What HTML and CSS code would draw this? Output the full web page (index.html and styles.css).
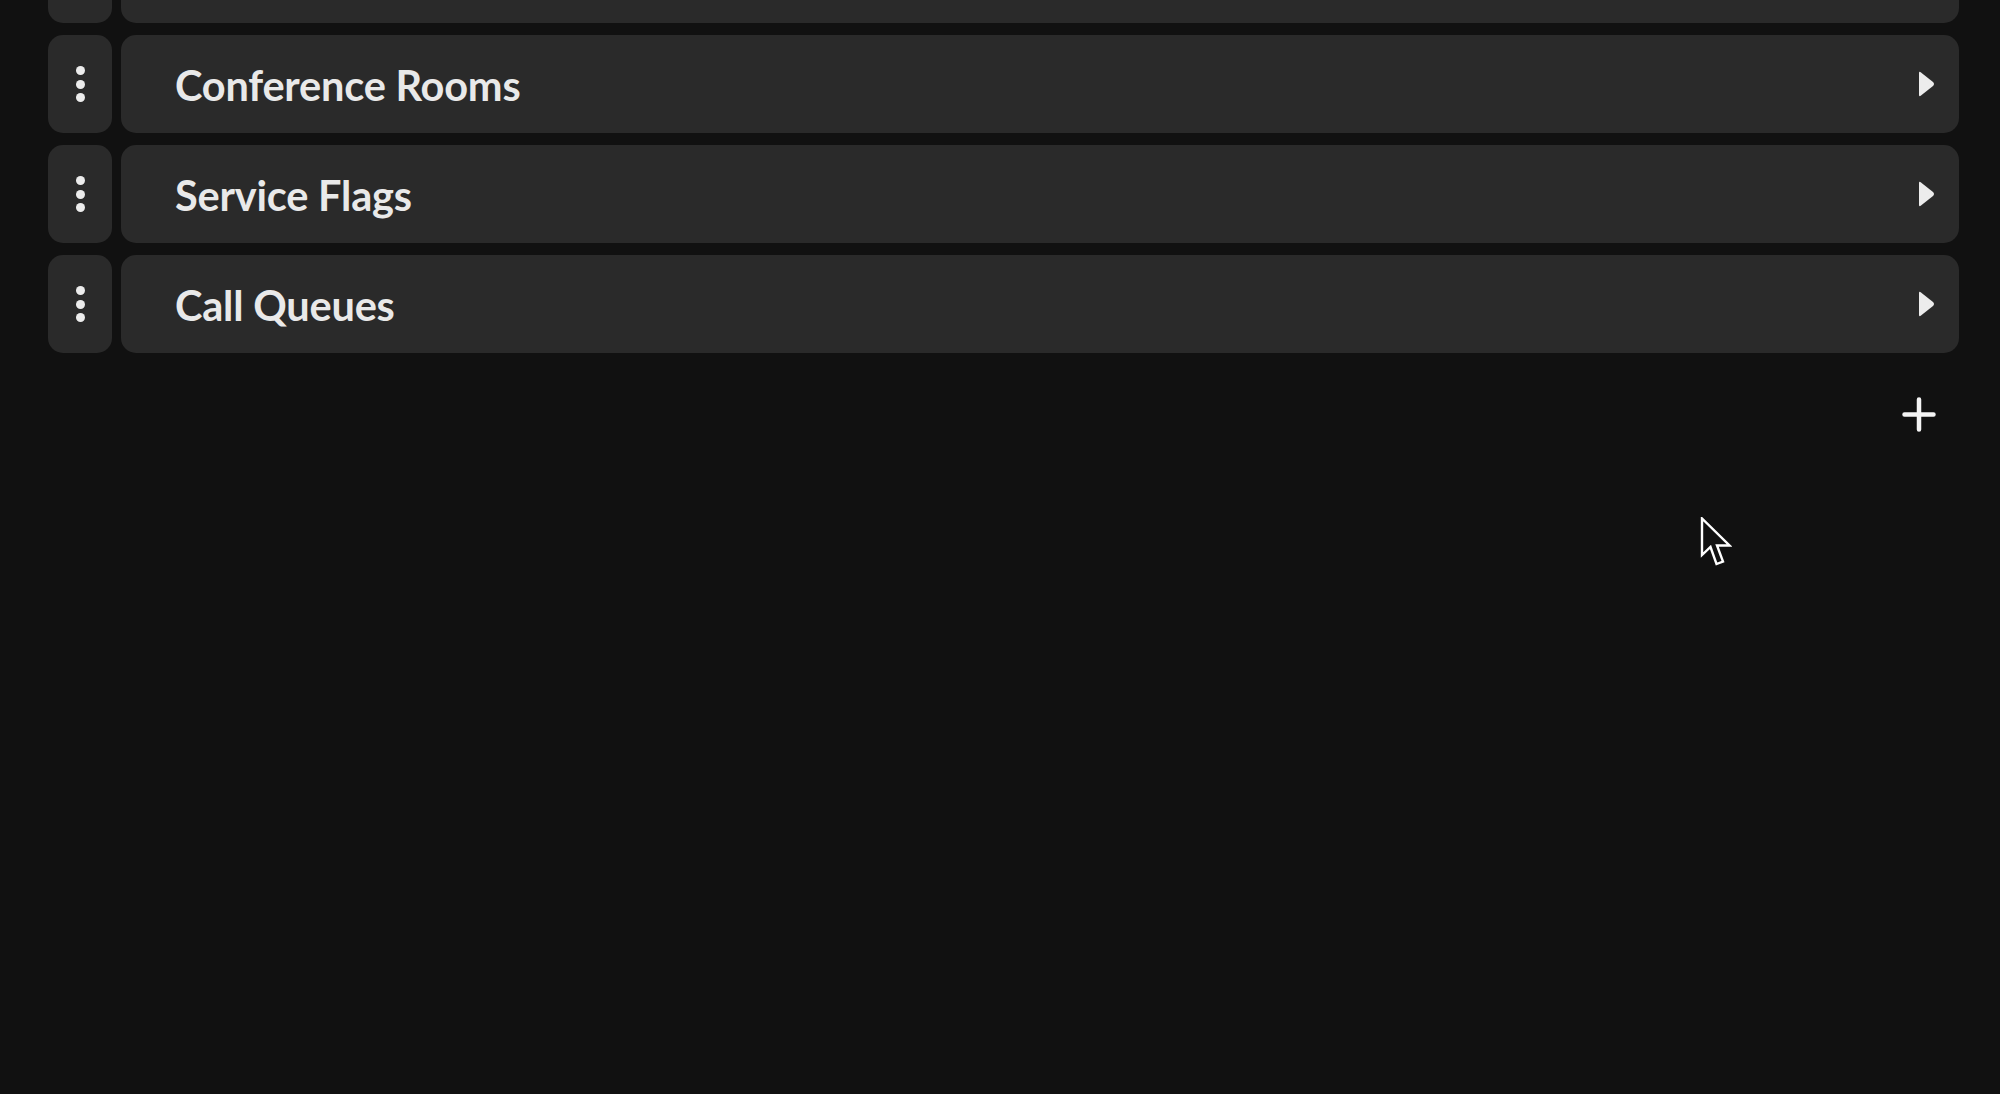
FILE: index.html
```html
<!DOCTYPE html>
<html lang="en">
<head>
<meta charset="utf-8">
<title>Groups</title>
<link rel="stylesheet" href="styles.css">
</head>
<body>
<main class="page">
  <ul class="list">
    <li class="row">
      <div class="handle"><span class="dots"><i></i><i></i><i></i></span></div>
      <div class="bar"></div>
    </li>
    <li class="row">
      <div class="handle"><span class="dots"><i></i><i></i><i></i></span></div>
      <div class="bar"><span class="label">Conference Rooms</span>
        <svg class="caret" viewBox="0 0 17 28" width="17" height="28"><path d="M3 2.5 L15 12 Q17 14 15 16 L3 25.5 Q1 27 1 25 V3 Q1 1 3 2.5 Z" fill="#ececec"/></svg>
      </div>
    </li>
    <li class="row">
      <div class="handle"><span class="dots"><i></i><i></i><i></i></span></div>
      <div class="bar"><span class="label">Service Flags</span>
        <svg class="caret" viewBox="0 0 17 28" width="17" height="28"><path d="M3 2.5 L15 12 Q17 14 15 16 L3 25.5 Q1 27 1 25 V3 Q1 1 3 2.5 Z" fill="#ececec"/></svg>
      </div>
    </li>
    <li class="row">
      <div class="handle"><span class="dots"><i></i><i></i><i></i></span></div>
      <div class="bar"><span class="label">Call Queues</span>
        <svg class="caret" viewBox="0 0 17 28" width="17" height="28"><path d="M3 2.5 L15 12 Q17 14 15 16 L3 25.5 Q1 27 1 25 V3 Q1 1 3 2.5 Z" fill="#ececec"/></svg>
      </div>
    </li>
  </ul>
  <div class="actions">
    <button class="add" aria-label="Add">
      <svg viewBox="0 0 34 35" width="34" height="35"><path d="M17 2.5 V32.5 M2.5 17.5 H31.5" stroke="#f4f4f4" stroke-width="4.5" stroke-linecap="round" fill="none"/></svg>
    </button>
  </div>
</main>
<svg class="cursor" viewBox="0 0 32 50" width="32" height="50"><path d="M2 1.5 V38 L10.5 30 L16.5 47 L23 44.5 L17 28.5 L29.5 28.5 Z" fill="#111" stroke="#fff" stroke-width="2.4" stroke-linejoin="miter"/></svg>
</body>
</html>
```
FILE: styles.css
```css
html, body {
  margin: 0;
  padding: 0;
  background: #111111;
  height: 100%;
  overflow: hidden;
}
.page {
  padding: 0 41px 0 48px;
  font-family: "Lato", "Liberation Sans", sans-serif;
}
.list {
  list-style: none;
  margin: -75px 0 0 0;
  padding: 0;
  display: flex;
  flex-direction: column;
  gap: 12px;
}
.row {
  display: flex;
  gap: 9px;
  height: 98px;
}
.handle {
  width: 64px;
  flex: none;
  background: #2a2a2a;
  border-radius: 15px;
  display: flex;
  align-items: center;
  justify-content: center;
}
.dots {
  display: flex;
  flex-direction: column;
  gap: 4.5px;
}
.dots i {
  display: block;
  width: 9px;
  height: 9px;
  border-radius: 50%;
  background: #ececec;
}
.bar {
  flex: 1;
  background: #2a2a2a;
  border-radius: 15px;
  display: flex;
  align-items: center;
  justify-content: space-between;
  padding: 0 24px 0 54px;
}
.label {
  color: #e9e9e9;
  font-size: 41.5px;
  font-weight: 700;
  letter-spacing: -0.2px;
  padding-top: 2px;
}
.caret {
  display: block;
}
.actions {
  display: flex;
  justify-content: flex-end;
  padding: 44px 23px 0 0;
}
.add {
  background: none;
  border: 0;
  padding: 0;
  display: block;
  cursor: pointer;
}
.add svg {
  display: block;
}
.cursor {
  position: absolute;
  left: 1700px;
  top: 517px;
}
```
